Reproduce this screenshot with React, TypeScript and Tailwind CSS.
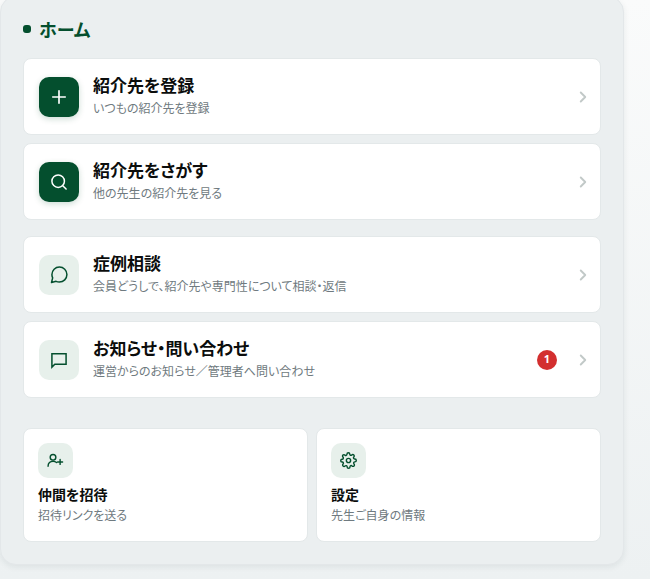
import React from 'react'
import { ChevronRight } from 'lucide-react'

interface MenuItem {
  title: string
  description: string
  icon: React.ReactNode
  primary?: boolean
  badge?: number
}

const iconProps = {
  viewBox: '0 0 24 24',
  fill: 'none',
  stroke: 'currentColor',
  strokeLinecap: 'round',
  strokeLinejoin: 'round'
} as const

const registerItems: MenuItem[] = [
  {
    title: '紹介先を登録',
    description: 'いつもの紹介先を登録',
    primary: true,
    icon: (
      <svg {...iconProps} strokeWidth={2} className="size-5">
        <path d="M12 4.500v15M4.500 12h15" />
      </svg>
    )
  },
  {
    title: '紹介先をさがす',
    description: '他の先生の紹介先を見る',
    primary: true,
    icon: (
      <svg {...iconProps} strokeWidth={1.8} className="size-5">
        <circle cx="11" cy="11" r="7.5" />
        <path d="m16.5 16.5 4 4" />
      </svg>
    )
  }
]

const messageItems: MenuItem[] = [
  {
    title: '症例相談',
    description: '会員どうしで、紹介先や専門性について相談・返信',
    icon: (
      <svg {...iconProps} strokeWidth={1.8} className="size-5">
        <path d="M21.5 11.5a9 9 0 0 1-9 9 9 9 0 0 1-4-.9L3 21l1.400-5.500a9 9 0 0 1-.9-4 9 9 0 0 1 18 0z" />
      </svg>
    )
  },
  {
    title: 'お知らせ・問い合わせ',
    description: '運営からのお知らせ／管理者へ問い合わせ',
    badge: 1,
    icon: (
      <svg {...iconProps} strokeWidth={1.8} strokeLinejoin="miter" className="size-5">
        <path d="M3.500 4.500h17v12.500H7l-3.500 3.500z" />
      </svg>
    )
  }
]

const subItems: MenuItem[] = [
  {
    title: '仲間を招待',
    description: '招待リンクを送る',
    icon: (
      <svg {...iconProps} strokeWidth={2} className="size-[17px]">
        <circle cx="8.500" cy="7.500" r="4" />
        <path d="M1.500 20c0-4.200 3-7 7-7 2 0 3.600.7 5 1.900M18.500 10.500v7M15 14h7" />
      </svg>
    )
  },
  {
    title: '設定',
    description: '先生ご自身の情報',
    icon: (
      <svg {...iconProps} strokeWidth={2} className="size-[17px]">
        <circle cx="12" cy="12" r="3" />
        <path d="M19.400 15a1.650 1.650 0 0 0 .33 1.820l.06.06a2 2 0 1 1-2.830 2.830l-.06-.06a1.650 1.650 0 0 0-2.800 1.170V21a2 2 0 0 1-4 0v-.09a1.650 1.650 0 0 0-2.900-1.100l-.06.06a2 2 0 1 1-2.830-2.830l.06-.06a1.650 1.650 0 0 0-1.170-2.800H3a2 2 0 0 1 0-4h.09a1.650 1.650 0 0 0 1.100-2.900l-.06-.06a2 2 0 1 1 2.830-2.830l.06.06a1.650 1.650 0 0 0 2.800-1.170V3a2 2 0 0 1 4 0v.09a1.650 1.650 0 0 0 2.800 1.170l.06-.06a2 2 0 1 1 2.830 2.830l-.06.06a1.650 1.650 0 0 0 1.170 2.800H21a2 2 0 0 1 0 4h-.09a1.650 1.650 0 0 0-1.510 1z" />
      </svg>
    )
  }
]

function MenuCard({ item }: { item: MenuItem }) {
  return (
    <button
      type="button"
      className="flex w-full cursor-pointer items-center rounded-lg border border-[#e3e8e9] bg-white py-4 pr-2 pl-[15px] text-left hover:bg-gray-50"
    >
      <span
        className={`flex size-10 shrink-0 items-center justify-center rounded-[10px] ${
          item.primary
            ? 'bg-[#044f2e] text-white shadow-[0_2px_6px_rgba(4,79,46,0.2)]'
            : 'bg-[#e7f0eb] text-[#044f2e]'
        }`}
      >
        {item.icon}
      </span>
      <span className="ml-3.5 min-w-0 flex-1">
        <span className="block text-[17px] leading-5 font-bold text-[#0b0d0c]">{item.title}</span>
        <span className="mt-[3px] block text-xs leading-5 text-[#6f7a80]">{item.description}</span>
      </span>
      {item.badge && (
        <span className="mr-[17px] flex size-5 shrink-0 items-center justify-center rounded-full bg-[#d32f2f] font-['Noto_Sans'] text-[11px] font-bold text-white">
          {item.badge}
        </span>
      )}
      <ChevronRight className="size-[18px] shrink-0 text-[#c2c9c8]" strokeWidth={2.5} />
    </button>
  )
}

function SubCard({ item }: { item: MenuItem }) {
  return (
    <button
      type="button"
      className="flex cursor-pointer flex-col items-start rounded-lg border border-[#e3e8e9] bg-white px-3.5 pt-3.5 pb-[15px] text-left hover:bg-gray-50"
    >
      <span className="flex size-[35px] items-center justify-center rounded-[10px] bg-[#e7f0eb] text-[#044f2e]">
        {item.icon}
      </span>
      <span className="mt-1.5 text-sm leading-5 font-bold text-[#0b0d0c]">{item.title}</span>
      <span className="text-xs leading-[22px] text-[#6f7a80]">{item.description}</span>
    </button>
  )
}

export default function App() {
  return (
    <div className="flow-root min-h-screen bg-linear-to-b from-[#fafbfb] to-[#edf1f2] font-['Noto_Sans_CJK_JP',sans-serif] [font-feature-settings:'palt']">
      <main className="-mt-1 mr-[26px] rounded-2xl border border-[#e3e7e9] bg-[#ebeff0] px-[22px] pt-[18px] pb-[22px] shadow-[0_2px_6px_rgba(30,50,50,0.08)]">
        <h1 className="flex items-center gap-2 text-lg leading-7 font-bold text-[#044f2e]">
          <span className="size-2 rounded-[3px] bg-[#044f2e]" />
          ホーム
        </h1>

        <div className="mt-[15px] space-y-2">
          {registerItems.map((item) => (
            <MenuCard key={item.title} item={item} />
          ))}
        </div>

        <div className="mt-4 space-y-2">
          {messageItems.map((item) => (
            <MenuCard key={item.title} item={item} />
          ))}
        </div>

        <div className="mt-[30px] grid grid-cols-2 gap-2">
          {subItems.map((item) => (
            <SubCard key={item.title} item={item} />
          ))}
        </div>
      </main>
    </div>
  )
}
